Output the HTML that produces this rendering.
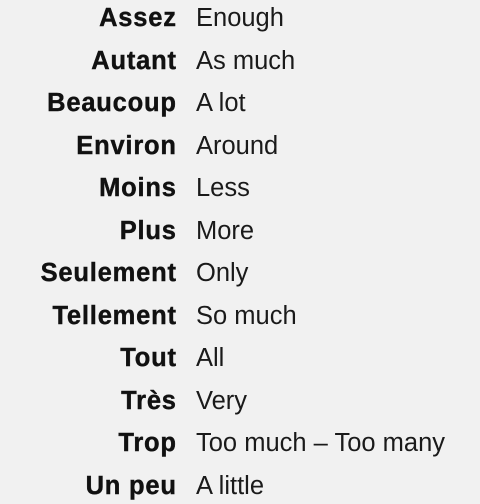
<!DOCTYPE html>
<html><head><style>
body{margin:0;width:480px;height:504px;background:#f1f1f1;overflow:hidden;font-family:"Liberation Sans",sans-serif;color:#111}
.r{position:absolute;left:0;width:480px;height:30px;line-height:30px;font-size:25.5px}
.f{position:absolute;right:304px;font-weight:bold;letter-spacing:0.8px;margin-right:-0.8px;-webkit-text-stroke:0.4px #111}
.e{position:absolute;left:196px;color:#1a1a1a}
</style></head><body>
<div class="r" style="top:3px"><span class="f">Assez</span><span class="e">Enough</span></div>
<div class="r" style="top:45.5px"><span class="f">Autant</span><span class="e">As much</span></div>
<div class="r" style="top:88px"><span class="f">Beaucoup</span><span class="e">A lot</span></div>
<div class="r" style="top:130.5px"><span class="f">Environ</span><span class="e">Around</span></div>
<div class="r" style="top:173px"><span class="f">Moins</span><span class="e">Less</span></div>
<div class="r" style="top:215.5px"><span class="f">Plus</span><span class="e">More</span></div>
<div class="r" style="top:258px"><span class="f">Seulement</span><span class="e">Only</span></div>
<div class="r" style="top:300.5px"><span class="f">Tellement</span><span class="e">So much</span></div>
<div class="r" style="top:343px"><span class="f">Tout</span><span class="e">All</span></div>
<div class="r" style="top:385.5px"><span class="f">Très</span><span class="e">Very</span></div>
<div class="r" style="top:428px"><span class="f">Trop</span><span class="e">Too much – Too many</span></div>
<div class="r" style="top:470.5px"><span class="f">Un peu</span><span class="e">A little</span></div>
</body></html>
